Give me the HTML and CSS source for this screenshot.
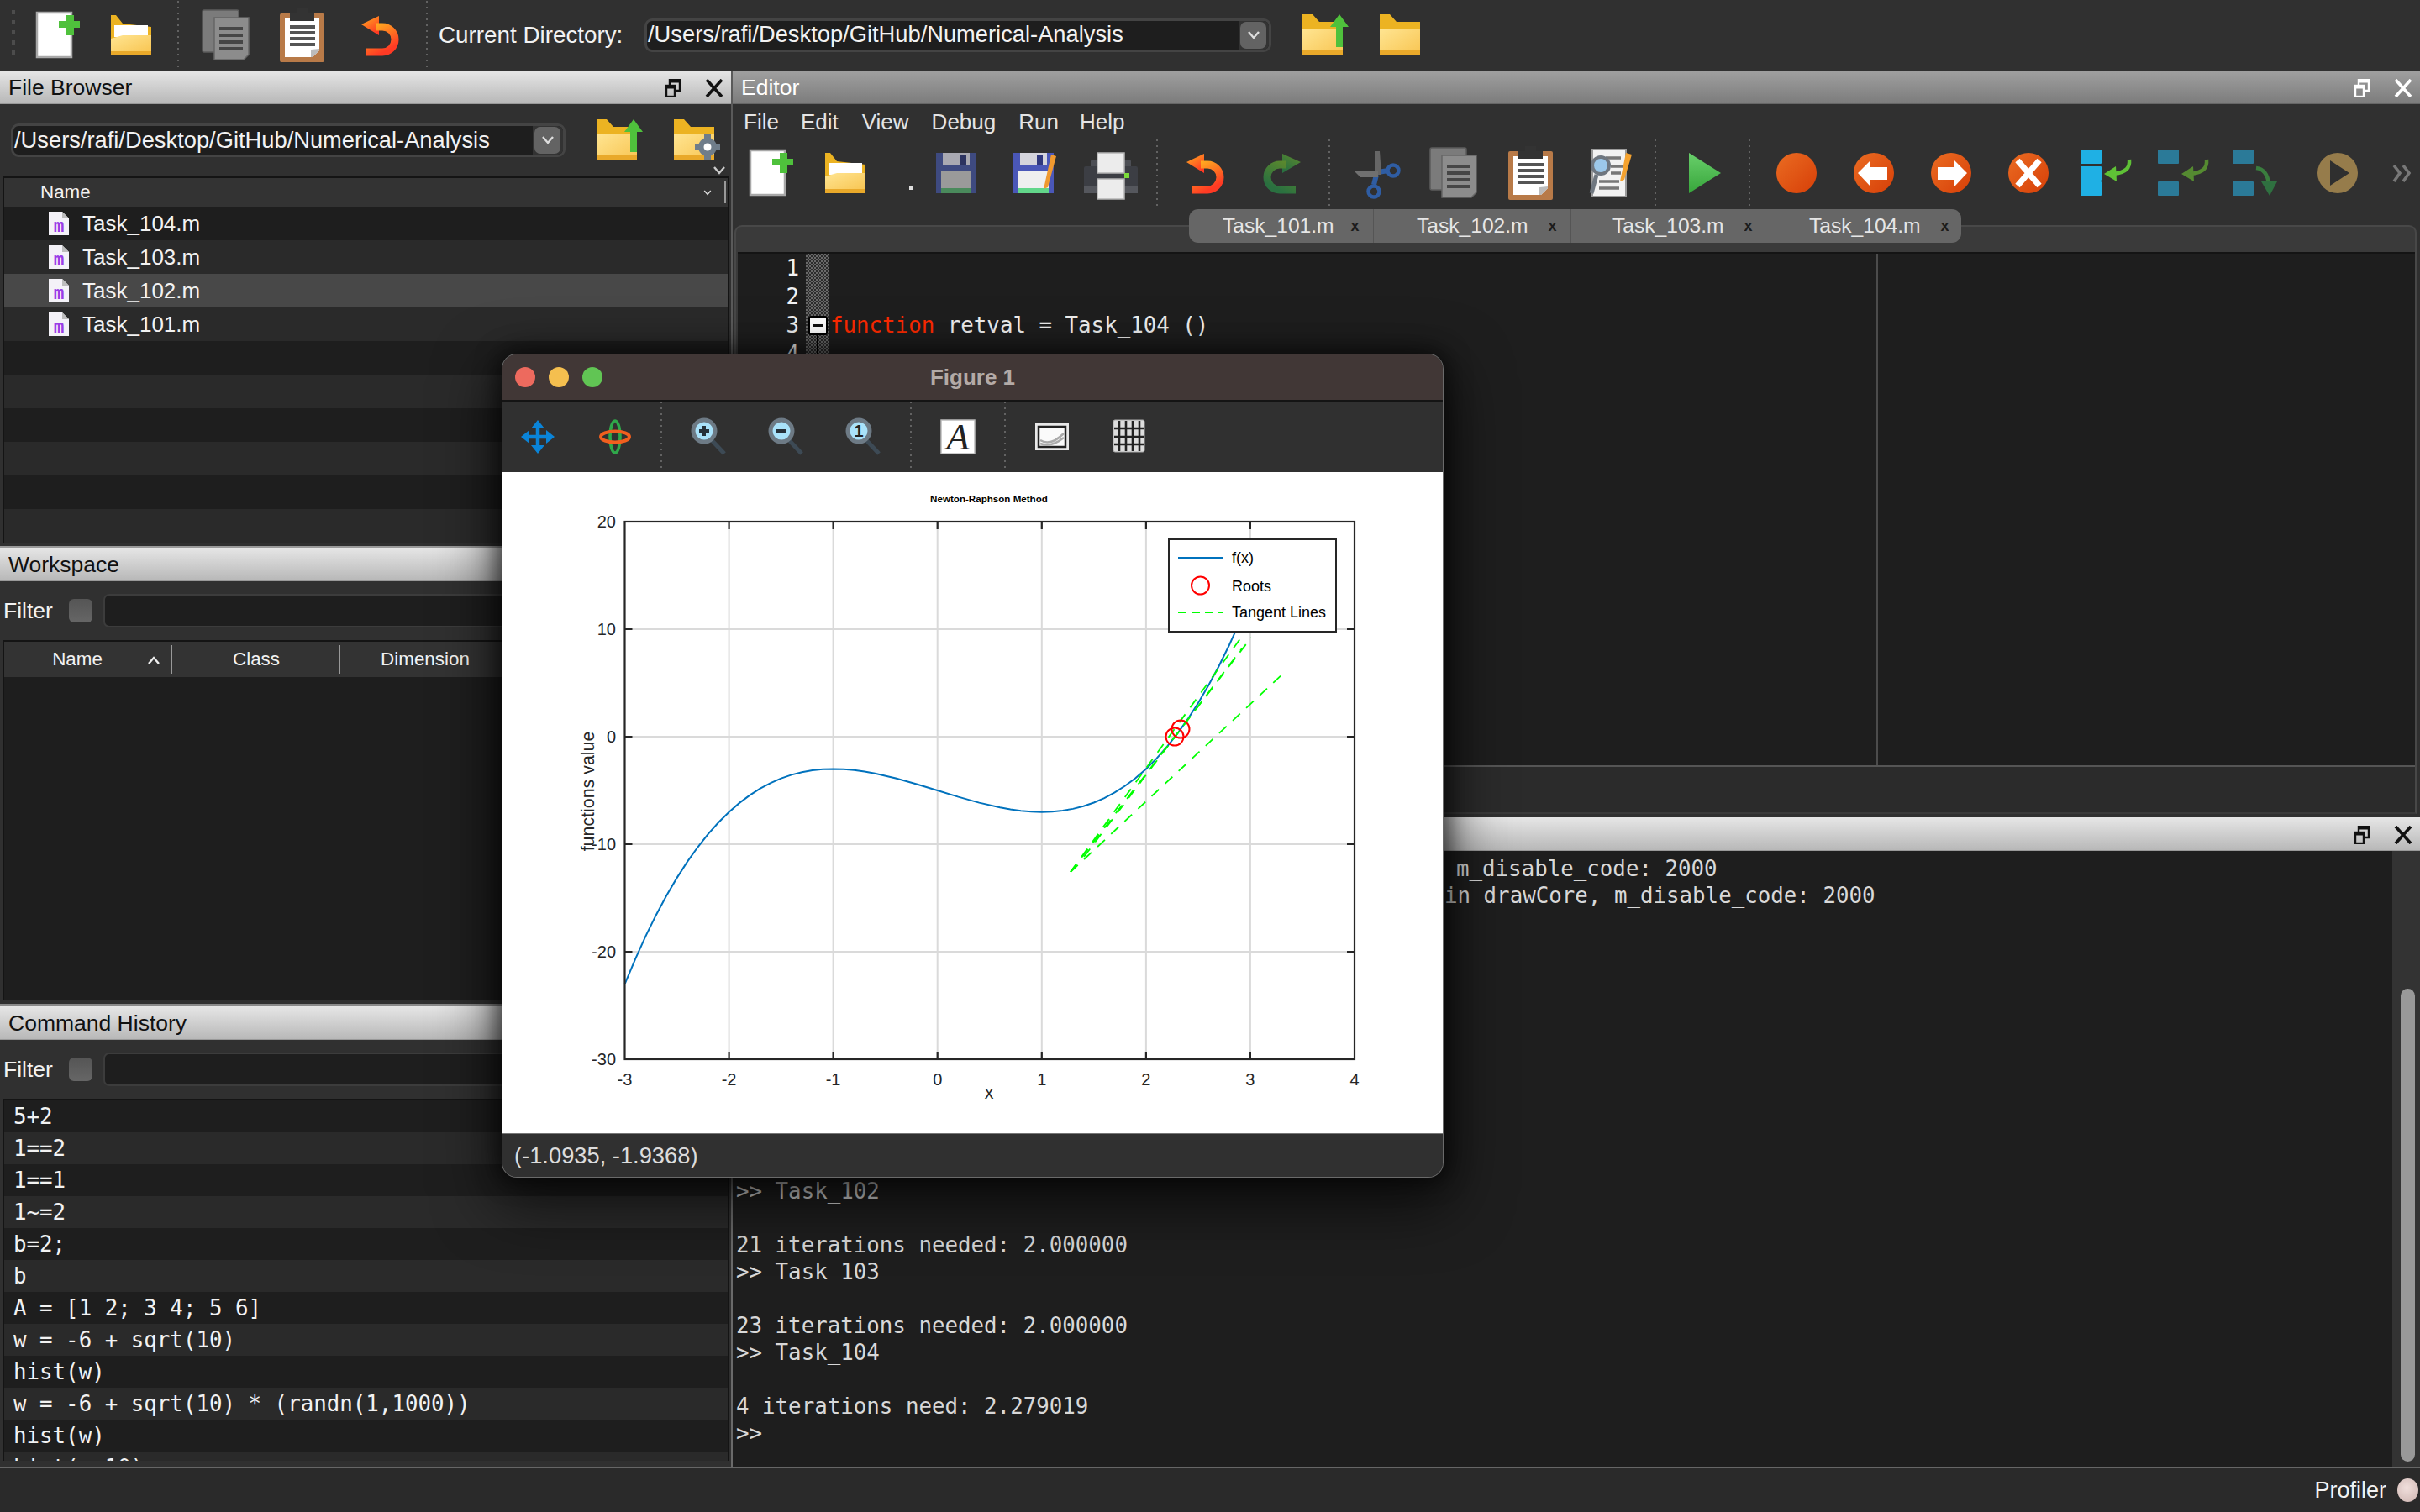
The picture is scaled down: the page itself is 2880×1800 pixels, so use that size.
FILE: index.html
```html
<!DOCTYPE html>
<html lang="en">
<head>
<meta charset="utf-8">
<title>GNU Octave</title>
<link rel="stylesheet" href="styles.css">
</head>
<body>
<svg class="defs" width="0" height="0" aria-hidden="true">
  <defs>
    <linearGradient id="gFolder" x1="0" y1="0" x2="1" y2="1"><stop offset="0" stop-color="#ffe592"/><stop offset="1" stop-color="#f8c552"/></linearGradient>
    <linearGradient id="gUndo" x1="0" y1="0" x2="0.6" y2="1"><stop offset="0" stop-color="#ffb31f"/><stop offset="1" stop-color="#ff3a24"/></linearGradient>
    <linearGradient id="gRedo" x1="1" y1="0" x2="0.4" y2="1"><stop offset="0" stop-color="#5f8a2c"/><stop offset="1" stop-color="#2a7040"/></linearGradient>
    <linearGradient id="gRun" x1="0" y1="0" x2="0" y2="1"><stop offset="0" stop-color="#69cf6b"/><stop offset="1" stop-color="#37a63b"/></linearGradient>
    <linearGradient id="gRec" x1="0" y1="0" x2="1" y2="1"><stop offset="0" stop-color="#ea6c22"/><stop offset="1" stop-color="#d73f08"/></linearGradient>

    <symbol id="i-new" viewBox="0 0 64 64">
      <rect x="7" y="5" width="41" height="53" fill="#fff" stroke="#a8a8a8" stroke-width="2.5"/>
      <path d="M42 8h9v7h7v8h-7v9h-9v-9h-9v-8h9z" fill="#4fc13c"/>
    </symbol>
    <symbol id="i-open" viewBox="0 0 64 64">
      <path d="M8 8h6l8 10 34 4v34H8z" fill="#ecb322"/>
      <rect x="12" y="20" width="40" height="14" fill="#fff"/>
      <path d="M8 36l14-4h34v20H8z" fill="url(#gFolder)"/>
      <rect x="8" y="51" width="48" height="5" fill="#e9a92a"/>
    </symbol>
    <symbol id="i-folder" viewBox="0 0 64 64">
      <path d="M8 7h12l8 9h28v12H8z" fill="#ecb322"/>
      <rect x="8" y="24" width="48" height="31" fill="url(#gFolder)"/>
      <rect x="8" y="50" width="48" height="5" fill="#e9a92a"/>
    </symbol>
    <symbol id="i-folder-up" viewBox="0 0 64 64">
      <use href="#i-folder" width="64" height="64"/>
      <path d="M52 7l11 15h-7v24h-8V22h-7z" fill="#4fc13c"/>
    </symbol>
    <symbol id="i-folder-gear" viewBox="0 0 64 64">
      <use href="#i-folder" width="64" height="64"/>
      <circle cx="48" cy="40" r="11" fill="#6f7d8a"/>
      <path d="M44 24h8v32h-8zM33 36h30v8H33z" fill="#6f7d8a"/>
      <circle cx="48" cy="40" r="4.5" fill="#fff"/>
    </symbol>
    <symbol id="i-save" viewBox="0 0 64 64">
      <rect x="8" y="8" width="48" height="48" fill="#3e4a80"/>
      <rect x="16" y="8" width="32" height="15" fill="#a9a9b2"/>
      <rect x="37" y="11" width="7" height="11" fill="#2c3360"/>
      <rect x="14" y="30" width="36" height="26" fill="#9a9a9a"/>
      <rect x="14" y="50" width="36" height="6" fill="#4a8a5c"/>
    </symbol>
    <symbol id="i-saveas" viewBox="0 0 64 64">
      <rect x="5" y="8" width="48" height="48" fill="#4a57b8"/>
      <rect x="13" y="8" width="32" height="15" fill="#d4d4dc"/>
      <rect x="33" y="11" width="7" height="11" fill="#30387e"/>
      <rect x="11" y="30" width="36" height="26" fill="#efefef"/>
      <rect x="11" y="50" width="36" height="6" fill="#62d68a"/>
      <path d="M50 10l6 2-10 37-5 2z" fill="#f0992f"/>
    </symbol>
    <symbol id="i-print" viewBox="0 0 64 64">
      <rect x="8" y="16" width="48" height="12" rx="2" fill="#4c4e54"/>
      <rect x="0" y="24" width="64" height="32" rx="2" fill="#3c3e44"/>
      <rect x="0" y="48" width="64" height="8" fill="#55575d"/>
      <rect x="16" y="8" width="32" height="24" fill="#ececec" stroke="#b5b5b5" stroke-width="1.5"/>
      <rect x="16" y="39" width="32" height="24" fill="#ececec" stroke="#b5b5b5" stroke-width="1.5"/>
      <rect x="48" y="32" width="6" height="6" fill="#7bdc39"/>
    </symbol>
    <symbol id="i-undo" viewBox="0 0 64 64">
      <path d="M9 19L30 9v23z" fill="url(#gUndo)"/>
      <path d="M26 22h8a15 15 0 0 1 0 30H15" fill="none" stroke="url(#gUndo)" stroke-width="9"/>
    </symbol>
    <symbol id="i-redo" viewBox="0 0 64 64">
      <path d="M55 19L33 9v23z" fill="url(#gRedo)"/>
      <path d="M38 22h-8a15 15 0 0 0 0 30h19" fill="none" stroke="url(#gRedo)" stroke-width="9"/>
    </symbol>
    <symbol id="i-cut" viewBox="0 0 64 64">
      <path d="M33 31L45 29" stroke="#2f5da3" stroke-width="6" fill="none"/>
      <path d="M31 34L28 46" stroke="#2f5da3" stroke-width="6" fill="none"/>
      <circle cx="51" cy="29" r="6.5" fill="none" stroke="#2f5da3" stroke-width="4.5"/>
      <circle cx="28" cy="54" r="6.5" fill="none" stroke="#2f5da3" stroke-width="4.5"/>
      <path d="M29 6h6l2 28h-8z" fill="#666"/>
      <path d="M5 30h28v7H12z" fill="#707070"/>
    </symbol>
    <symbol id="i-copy" viewBox="0 0 64 64">
      <rect x="4" y="2" width="43" height="50" rx="2" fill="#7b7b7b" stroke="#5c5c5c" stroke-width="1.5"/>
      <path d="M18 11h41v44l-6 6H18z" fill="#8c8c8c" stroke="#666" stroke-width="1.5"/>
      <path d="M24 24h28M24 32h28M24 40h28M24 48h28" stroke="#464646" stroke-width="4"/>
    </symbol>
    <symbol id="i-paste" viewBox="0 0 64 64">
      <rect x="5" y="6" width="53" height="58" rx="2" fill="#b87a48"/>
      <path d="M11 12h41v38l-8 8H11z" fill="#fff"/>
      <path d="M44 58l8-8v-2l-10 1v9z" fill="#bcbcbc"/>
      <path d="M25 0h13v6h8v9H17V6h8z" fill="#333"/>
      <path d="M17 22h30M17 29h30M17 36h30M17 43h30" stroke="#555" stroke-width="4"/>
    </symbol>
    <symbol id="i-find" viewBox="0 0 64 64">
      <rect x="10" y="4" width="40" height="56" fill="#f2f2f2" stroke="#9a9a9a" stroke-width="2"/>
      <path d="M26 14h18M32 24h14M32 32h12M18 42h24M18 50h24" stroke="#777" stroke-width="3.5"/>
      <path d="M15 34L9 56" stroke="#6f7780" stroke-width="5"/>
      <circle cx="20" cy="23" r="10" fill="#9cc8ea" stroke="#6f7780" stroke-width="4"/>
      <path d="M50 8l7 2-9 30-5 2z" fill="#f4a22f"/>
    </symbol>
    <symbol id="i-run" viewBox="0 0 64 64"><path d="M13 8l38 24-38 24z" fill="url(#gRun)"/></symbol>
    <symbol id="i-rec" viewBox="0 0 64 64"><circle cx="32" cy="32" r="24" fill="url(#gRec)"/></symbol>
    <symbol id="i-back" viewBox="0 0 64 64">
      <circle cx="32" cy="32" r="24" fill="url(#gRec)"/>
      <path d="M13 32l15-15v8h20v15H28v8z" fill="#fff"/>
    </symbol>
    <symbol id="i-fwd" viewBox="0 0 64 64">
      <circle cx="32" cy="32" r="24" fill="url(#gRec)"/>
      <path d="M51 32L36 17v8H16v15h20v8z" fill="#fff"/>
    </symbol>
    <symbol id="i-stop" viewBox="0 0 64 64">
      <circle cx="32" cy="32" r="24" fill="url(#gRec)"/>
      <path d="M19 17l26 30M45 17L19 47" stroke="#fff" stroke-width="7" fill="none"/>
    </symbol>
    <symbol id="i-step" viewBox="0 0 64 64">
      <rect x="2" y="4" width="25" height="17" rx="1" fill="#1fb0e4"/>
      <rect x="2" y="24" width="25" height="17" rx="1" fill="#1fb0e4"/>
      <rect x="2" y="42" width="25" height="17" rx="1" fill="#1fb0e4"/>
      <path d="M60 16c1 10-4 15-18 17" fill="none" stroke="#5fc136" stroke-width="4.5"/>
      <path d="M30 33l14-9 1 18z" fill="#5fc136"/>
    </symbol>
    <symbol id="i-stepin" viewBox="0 0 64 64">
      <rect x="2" y="4" width="25" height="17" rx="1" fill="#2b7a98"/>
      <rect x="2" y="42" width="25" height="17" rx="1" fill="#2b7a98"/>
      <path d="M60 16c1 10-4 15-18 17" fill="none" stroke="#558a31" stroke-width="4.5"/>
      <path d="M30 33l14-9 1 18z" fill="#558a31"/>
    </symbol>
    <symbol id="i-stepout" viewBox="0 0 64 64">
      <rect x="2" y="4" width="25" height="17" rx="1" fill="#2b7a98"/>
      <rect x="2" y="42" width="25" height="17" rx="1" fill="#2b7a98"/>
      <path d="M30 26c9 1 14 8 15 20" fill="none" stroke="#3a7d3e" stroke-width="4.5"/>
      <path d="M36 42h19l-9 17z" fill="#2f7040"/>
    </symbol>
    <symbol id="i-cont" viewBox="0 0 64 64">
      <circle cx="32" cy="32" r="24" fill="#967c4b"/>
      <path d="M23 17l23 15-23 15z" fill="#2f2f2f"/>
    </symbol>
    <symbol id="i-more" viewBox="0 0 64 64">
      <path d="M21 23l7 9-7 10M32 23l7 9-7 10" fill="none" stroke="#777" stroke-width="3.6"/>
    </symbol>
    <symbol id="i-mfile" viewBox="0 0 26 30">
      <path d="M1 1h16l8 8v20H1z" fill="#f4f2f8"/>
      <path d="M17 1l8 8h-8z" fill="#bdbdbd"/>
      <text x="13" y="25" text-anchor="middle" class="m-letter">m</text>
    </symbol>
    <symbol id="i-dock" viewBox="0 0 20 22">
      <path d="M6 7V1h12v13h-6" fill="none" stroke="currentColor" stroke-width="2.4"/>
      <path d="M6 3h12" stroke="currentColor" stroke-width="3"/>
      <rect x="2" y="8" width="10" height="13" fill="none" stroke="currentColor" stroke-width="2.4"/>
      <path d="M2 10h10" stroke="currentColor" stroke-width="3"/>
    </symbol>
    <symbol id="i-close" viewBox="0 0 22 22">
      <path d="M2 1l18 20M20 1L2 21" fill="none" stroke="currentColor" stroke-width="3.6"/>
    </symbol>
    <symbol id="i-chev" viewBox="0 0 16 10">
      <path d="M2 1l6 7 6-7" fill="none" stroke="currentColor" stroke-width="2.4"/>
    </symbol>

    <symbol id="f-pan" viewBox="0 0 48 48">
      <path d="M24 8v32M8 24h32" stroke="#0a84d8" stroke-width="4.5" fill="none"/>
      <path d="M24 4l8 10H16zM24 44l8-10H16zM4 24l10-8v16zM44 24l-10-8v16z" fill="#0a84d8"/>
    </symbol>
    <symbol id="f-rot" viewBox="0 0 48 48">
      <ellipse cx="24" cy="24" rx="6" ry="19" fill="none" stroke="#2fa84a" stroke-width="3.6"/>
      <ellipse cx="24" cy="24" rx="17" ry="6.5" fill="none" stroke="#f15f1e" stroke-width="4"/>
    </symbol>
    <symbol id="f-zin" viewBox="0 0 48 48">
      <path d="M28 28l15 16" stroke="#3d4a55" stroke-width="5"/>
      <circle cx="19" cy="17" r="13" fill="#a9e2fa" stroke="#6d7a85" stroke-width="5"/>
      <path d="M13 17h12M19 11v12" stroke="#26313a" stroke-width="4"/>
    </symbol>
    <symbol id="f-zout" viewBox="0 0 48 48">
      <path d="M28 28l15 16" stroke="#3d4a55" stroke-width="5"/>
      <circle cx="19" cy="17" r="13" fill="#a9e2fa" stroke="#6d7a85" stroke-width="5"/>
      <path d="M13 17h12" stroke="#26313a" stroke-width="4"/>
    </symbol>
    <symbol id="f-zone" viewBox="0 0 48 48">
      <path d="M28 28l15 16" stroke="#3d4a55" stroke-width="5"/>
      <circle cx="19" cy="17" r="13" fill="#a9e2fa" stroke="#6d7a85" stroke-width="5"/>
      <text x="19" y="24" text-anchor="middle" class="one-letter">1</text>
    </symbol>
    <symbol id="f-text" viewBox="0 0 48 48">
      <rect x="4" y="4" width="40" height="40" fill="#fff" stroke="#bbb" stroke-width="1.5"/>
      <text x="24" y="39" text-anchor="middle" class="a-letter">A</text>
    </symbol>
    <symbol id="f-axes" viewBox="0 0 48 48">
      <rect x="4" y="8" width="40" height="32" fill="#e8e8e8"/>
      <rect x="8" y="12" width="32" height="24" fill="#fafafa" stroke="#222" stroke-width="2.5"/>
      <path d="M10 28c8 5 18 2 28-8M10 32c8 3 18 1 28-7" stroke="#aaa" stroke-width="2.5" fill="none"/>
    </symbol>
    <symbol id="f-grid" viewBox="0 0 48 48">
      <rect x="5" y="4" width="37" height="38" rx="2" fill="#ddd" stroke="#aaa"/>
      <path d="M12 5v36M20 5v36M28 5v36M36 5v36M6 14h35M6 24h35M6 33h35" stroke="#222" stroke-width="2.6"/>
    </symbol>
  </defs>
</svg>

<header class="top-bar">
  <div class="tools tools-top">
    <span class="grip"></span>
    <svg class="ic"><use href="#i-new"/></svg>
    <svg class="ic"><use href="#i-open"/></svg>
    <span class="sep"></span>
    <svg class="ic"><use href="#i-copy"/></svg>
    <svg class="ic"><use href="#i-paste"/></svg>
    <svg class="ic"><use href="#i-undo"/></svg>
    <span class="sep"></span>
  </div>
  <span class="cwd-label">Current Directory:</span>
  <div class="combo combo-top">
    <span class="combo-text">/Users/rafi/Desktop/GitHub/Numerical-Analysis</span>
    <span class="combo-btn"><svg class="chev"><use href="#i-chev"/></svg></span>
  </div>
  <svg class="ic ic-up"><use href="#i-folder-up"/></svg>
  <svg class="ic ic-browse"><use href="#i-folder"/></svg>
</header>

<main class="workspace-area">
  <div class="left-col">
    <section class="pane pane-files">
      <div class="title-bar"><span class="title-text">File Browser</span><svg class="t-dock"><use href="#i-dock"/></svg><svg class="t-close"><use href="#i-close"/></svg></div>
      <div class="path-row">
        <div class="combo combo-files">
          <span class="combo-text">/Users/rafi/Desktop/GitHub/Numerical-Analysis</span>
          <span class="combo-btn"><svg class="chev"><use href="#i-chev"/></svg></span>
        </div>
        <svg class="ic ic-fup"><use href="#i-folder-up"/></svg>
        <svg class="ic ic-fgear"><use href="#i-folder-gear"/></svg>
        <svg class="chev overflow-chev"><use href="#i-chev"/></svg>
      </div>
      <div class="table files-table">
        <div class="thead"><span class="th-name">Name</span><svg class="chev th-chev"><use href="#i-chev"/></svg><span class="th-bar"></span></div>
        <div class="row"><svg class="mfile"><use href="#i-mfile"/></svg>Task_104.m</div>
        <div class="row"><svg class="mfile"><use href="#i-mfile"/></svg>Task_103.m</div>
        <div class="row selected"><svg class="mfile"><use href="#i-mfile"/></svg>Task_102.m</div>
        <div class="row"><svg class="mfile"><use href="#i-mfile"/></svg>Task_101.m</div>
        <div class="row"></div><div class="row"></div><div class="row"></div><div class="row"></div><div class="row"></div><div class="row"></div>
      </div>
    </section>

    <section class="pane pane-vars">
      <div class="title-bar"><span class="title-text">Workspace</span></div>
      <div class="filter-row"><span class="filter-label">Filter</span><span class="check"></span><span class="filter-input"></span></div>
      <div class="table vars-table">
        <div class="thead vars-head">
          <span class="vh vh-name">Name<svg class="chev sort-up"><use href="#i-chev"/></svg></span>
          <span class="vh">Class</span>
          <span class="vh">Dimension</span>
        </div>
      </div>
    </section>

    <section class="pane pane-hist">
      <div class="title-bar"><span class="title-text">Command History</span></div>
      <div class="filter-row"><span class="filter-label">Filter</span><span class="check"></span><span class="filter-input"></span></div>
      <div class="table hist-table">
        <div class="hrow">5+2</div>
        <div class="hrow">1==2</div>
        <div class="hrow">1==1</div>
        <div class="hrow">1~=2</div>
        <div class="hrow">b=2;</div>
        <div class="hrow">b</div>
        <div class="hrow">A = [1 2; 3 4; 5 6]</div>
        <div class="hrow">w = -6 + sqrt(10)</div>
        <div class="hrow">hist(w)</div>
        <div class="hrow">w = -6 + sqrt(10) * (randn(1,1000))</div>
        <div class="hrow">hist(w)</div>
        <div class="hrow">hist(w,10)</div>
      </div>
    </section>
  </div>

  <div class="right-col">
    <section class="editor-pane">
      <div class="title-bar title-dim"><span class="title-text">Editor</span><svg class="t-dock"><use href="#i-dock"/></svg><svg class="t-close"><use href="#i-close"/></svg></div>
      <nav class="menu"><span>File</span><span>Edit</span><span>View</span><span>Debug</span><span>Run</span><span>Help</span></nav>
      <div class="tools tools-editor">
        <svg class="ic"><use href="#i-new"/></svg>
        <svg class="ic"><use href="#i-open"/></svg>
        <span class="tiny-drop"></span>
        <svg class="ic"><use href="#i-save"/></svg>
        <svg class="ic"><use href="#i-saveas"/></svg>
        <svg class="ic"><use href="#i-print"/></svg>
        <span class="sep"></span>
        <svg class="ic"><use href="#i-undo"/></svg>
        <svg class="ic"><use href="#i-redo"/></svg>
        <span class="sep"></span>
        <svg class="ic"><use href="#i-cut"/></svg>
        <svg class="ic"><use href="#i-copy"/></svg>
        <svg class="ic"><use href="#i-paste"/></svg>
        <svg class="ic"><use href="#i-find"/></svg>
        <span class="sep"></span>
        <svg class="ic"><use href="#i-run"/></svg>
        <span class="sep"></span>
        <svg class="ic"><use href="#i-rec"/></svg>
        <svg class="ic"><use href="#i-back"/></svg>
        <svg class="ic"><use href="#i-fwd"/></svg>
        <svg class="ic"><use href="#i-stop"/></svg>
        <svg class="ic"><use href="#i-step"/></svg>
        <svg class="ic"><use href="#i-stepin"/></svg>
        <svg class="ic"><use href="#i-stepout"/></svg>
        <svg class="ic"><use href="#i-cont"/></svg>
        <svg class="ic"><use href="#i-more"/></svg>
      </div>
      <div class="tabs">
        <div class="tab tab-first"><span>Task_101.m</span><i>x</i></div>
        <div class="tab tab-mid"><span>Task_102.m</span><i>x</i></div>
        <div class="tab"><span>Task_103.m</span><i>x</i></div>
        <div class="tab tab-last"><span>Task_104.m</span><i>x</i></div>
      </div>
      <div class="tab-frame">
        <div class="editor">
          <div class="gutter"><div>1</div><div>2</div><div>3</div><div>4</div></div>
          <div class="marks"><span class="fold"></span><span class="fold-line"></span></div>
          <div class="code">
            <div>&nbsp;</div><div>&nbsp;</div>
            <div><span class="kw">function</span> retval = Task_104 ()</div>
          </div>
        </div>
        <div class="editor-foot"></div>
      </div>
    </section>

    <section class="console-pane">
      <div class="title-bar"><span class="title-text">Command Window</span><svg class="t-dock"><use href="#i-dock"/></svg><svg class="t-close"><use href="#i-close"/></svg></div>
      <div class="console-body">
        <div class="console-text">
          <div class="log-a">m_disable_code: 2000</div>
          <div class="log-b">in drawCore, m_disable_code: 2000</div>
          <div class="spacer-10"></div>
          <div>&gt;&gt; Task_102</div>
          <div>&nbsp;</div>
          <div>21 iterations needed: 2.000000</div>
          <div>&gt;&gt; Task_103</div>
          <div>&nbsp;</div>
          <div>23 iterations needed: 2.000000</div>
          <div>&gt;&gt; Task_104</div>
          <div>&nbsp;</div>
          <div>4 iterations need: 2.279019</div>
          <div>&gt;&gt; <span class="caret"></span></div>
        </div>
        <div class="scroll-track"><span class="scroll-thumb"></span></div>
      </div>
    </section>
  </div>
</main>

<footer class="status-bar"><span>Profiler</span><span class="led"></span></footer>

<section class="figure">
  <div class="fig-title">
    <span class="light l-red"></span><span class="light l-yellow"></span><span class="light l-green"></span>
    <span class="fig-name">Figure 1</span>
  </div>
  <div class="tools tools-fig">
    <svg class="ic-f"><use href="#f-pan"/></svg>
    <svg class="ic-f"><use href="#f-rot"/></svg>
    <span class="sep"></span>
    <svg class="ic-f"><use href="#f-zin"/></svg>
    <svg class="ic-f"><use href="#f-zout"/></svg>
    <svg class="ic-f"><use href="#f-zone"/></svg>
    <span class="sep"></span>
    <svg class="ic-f"><use href="#f-text"/></svg>
    <span class="sep"></span>
    <svg class="ic-f"><use href="#f-axes"/></svg>
    <svg class="ic-f"><use href="#f-grid"/></svg>
  </div>
  <svg class="plot" viewBox="598 562 1119 787">
    <g class="grid">
      <path d="M867.6 621V1261M991.6 621V1261M1115.7 621V1261M1239.8 621V1261M1363.9 621V1261M1487.9 621V1261"/>
      <path d="M743.5 749H1612M743.5 877H1612M743.5 1005H1612M743.5 1133H1612"/>
    </g>
    <g transform="translate(1115.7 877) scale(124.07 -12.81)">
      <polyline class="curve" points="-3,-23 -2.9,-20.689 -2.8,-18.552 -2.7,-16.583 -2.6,-14.776 -2.5,-13.125 -2.4,-11.624 -2.3,-10.267 -2.2,-9.048 -2.1,-7.961 -2,-7 -1.9,-6.159 -1.8,-5.432 -1.7,-4.813 -1.6,-4.296 -1.5,-3.875 -1.4,-3.544 -1.3,-3.297 -1.2,-3.128 -1.1,-3.031 -1,-3 -0.9,-3.029 -0.8,-3.112 -0.7,-3.243 -0.6,-3.416 -0.4,-3.864 -0.2,-4.408 0,-5 0.2,-5.592 0.4,-6.136 0.6,-6.584 0.7,-6.757 0.8,-6.888 0.9,-6.971 1,-7 1.1,-6.969 1.2,-6.872 1.3,-6.703 1.4,-6.456 1.5,-6.125 1.6,-5.704 1.7,-5.187 1.8,-4.568 1.9,-3.841 2,-3 2.1,-2.039 2.2,-0.952 2.3,0.267 2.4,1.624 2.5,3.125 2.6,4.776 2.7,6.583 2.8,8.552 2.9,10.689 3,13"/>
    </g>
    <g class="tangent">
      <path d="M1274 1038L1529 800"/>
      <path d="M1274 1038L1477 759"/>
      <path d="M1274 1038L1489 759"/>
      <path d="M1290 1020L1478 772"/>
    </g>
    <circle class="root" cx="1398" cy="877" r="10.5"/>
    <circle class="root" cx="1405" cy="868" r="10.5"/>
    <g class="axes">
      <rect x="743.5" y="621" width="868.5" height="640"/>
      <path d="M743.5 749h9M743.5 877h9M743.5 1005h9M743.5 1133h9M1612 749h-9M1612 877h-9M1612 1005h-9M1612 1133h-9"/>
      <path d="M867.6 621v9M991.6 621v9M1115.7 621v9M1239.8 621v9M1363.9 621v9M1487.9 621v9M867.6 1261v-9M991.6 1261v-9M1115.7 1261v-9M1239.8 1261v-9M1363.9 1261v-9M1487.9 1261v-9"/>
    </g>
    <text class="plot-title" x="1177" y="598" text-anchor="middle">Newton-Raphson Method</text>
    <g class="ylabels" text-anchor="end">
      <text x="733" y="628">20</text><text x="733" y="756">10</text><text x="733" y="884">0</text><text x="733" y="1012">-10</text><text x="733" y="1140">-20</text><text x="733" y="1268">-30</text>
    </g>
    <g class="xlabels" text-anchor="middle">
      <text x="743.5" y="1292">-3</text><text x="867.6" y="1292">-2</text><text x="991.6" y="1292">-1</text><text x="1115.7" y="1292">0</text><text x="1239.8" y="1292">1</text><text x="1363.9" y="1292">2</text><text x="1487.9" y="1292">3</text><text x="1612" y="1292">4</text>
    </g>
    <text class="axis-label" x="1177" y="1308" text-anchor="middle">x</text>
    <text class="axis-label" transform="translate(707 942) rotate(-90)" text-anchor="middle">functions value</text>
    <g class="legend">
      <rect x="1391" y="642" width="199" height="110"/>
      <path class="leg-curve" d="M1402 664H1455"/>
      <circle class="root" cx="1428.5" cy="697" r="10.5"/>
      <path class="leg-tan" d="M1402 729H1455"/>
      <text x="1466" y="670">f(x)</text><text x="1466" y="704">Roots</text><text x="1466" y="735">Tangent Lines</text>
    </g>
  </svg>
  <div class="fig-status">(-1.0935, -1.9368)</div>
</section>
</body>
</html>
```
FILE: styles.css
```css
* { box-sizing: border-box; }
html, body { margin: 0; padding: 0; }
body {
  width: 2880px;
  height: 1800px;
  overflow: hidden;
  position: relative;
  display: flex;
  flex-direction: column;
  background: #303030;
  color: #f2f2f2;
  font-family: "Liberation Sans", Arial, sans-serif;
  font-size: 26px;
}
.defs { position: absolute; }
.ic { width: 64px; height: 64px; display: block; }
.ic-f { width: 48px; height: 48px; display: block; }
.chev { width: 16px; height: 10px; display: block; color: #ddd; }
.m-letter { font: bold 21px "DejaVu Sans Mono", monospace; fill: #9a3de6; }
.one-letter { font: bold 20px "Liberation Sans", sans-serif; fill: #222; }
.a-letter { font: italic 44px "Liberation Serif", serif; fill: #222; }

/* toolbars: icon lefts are set by the column tracks */
.tools { display: grid; align-items: center; justify-items: start; }
.sep {
  width: 2px;
  height: 100%;
  background: repeating-linear-gradient(#626262 0 2px, transparent 2px 7px);
}
.tools-top {
  height: 82px;
  padding-left: 14px;
  grid-template-columns: 23px 87px 87px 26px 91px 93px 86px 15px;
}
.grip { width: 4px; height: 60px; background: repeating-linear-gradient(#4c4c4c 0 5px, transparent 5px 12px); }

.top-bar { height: 84px; display: flex; align-items: center; background: #303030; flex: none; }
.cwd-label { width: 245px; font-size: 27.8px; }
.combo {
  display: flex;
  align-items: center;
  height: 40px;
  border: 3px solid #444;
  border-radius: 9px;
  background: #1e1e1e;
  overflow: hidden;
  flex: none;
}
.combo-text { flex: 1; padding-left: 1px; font-size: 27.3px; white-space: nowrap; }
.combo-top .combo-text { padding-bottom: 3px; }
.combo-btn {
  width: 36px;
  height: 100%;
  background: #333;
  display: flex;
  align-items: center;
  justify-content: center;
  position: relative;
}
.combo-btn::before {
  content: "";
  position: absolute;
  inset: 1px 3px 1px 2px;
  background: #636363;
  border-radius: 7px;
}
.combo-btn .chev { position: relative; }
.combo-top { width: 746px; }
.combo-files { width: 660px; }
.ic-up { margin-left: 29px; }
.ic-browse { margin-left: 28px; }

/* layout */
.workspace-area { flex: none; height: 1662px; display: flex; }
.left-col { width: 870px; display: flex; flex-direction: column; flex: none; }
.right-col { flex: 1; display: flex; flex-direction: column; min-width: 0; }
.pane { display: flex; flex-direction: column; }
.pane-files { height: 568px; border-bottom: 2px solid #9a9a9a; }
.pane-vars { height: 546px; border-bottom: 3px solid #8a8a8a; }
.pane-hist { height: 548px; }

.title-bar {
  height: 40px;
  flex: none;
  display: flex;
  align-items: center;
  padding: 2px 0 0 10px;
  background: linear-gradient(#e6e6e6, #b8b8b8);
  color: #111;
  border-bottom: 1px solid #999;
}
.title-dim { background: linear-gradient(#a0a0a0, #7c7c7c); color: #fff; border-bottom-color: #666; }
.title-text { flex: 1; font-size: 26.5px; }
.t-dock { width: 20px; height: 22px; color: inherit; margin-right: 28px; }
.t-close { width: 22px; height: 22px; color: inherit; margin-right: 9px; }

.path-row {
  position: relative;
  height: 86px;
  flex: none;
  display: flex;
  align-items: center;
  padding-left: 13px;
}
.ic-fup { margin-left: 29px; }
.ic-fgear { margin-left: 28px; }
.overflow-chev { position: absolute; left: 848px; top: 74px; color: #ccc; }

.table { margin-left: 3px; width: 865px; border: 2px solid #141414; border-bottom: 0; }
.thead { height: 34px; background: #333; display: flex; align-items: center; position: relative; font-size: 22.4px; }
.th-name { padding-left: 43px; flex: 1; }
.th-chev { width: 10px; height: 7px; margin-right: 15px; }
.th-bar { width: 2px; height: 26px; background: #999; margin-right: 2px; }
.row { height: 40px; display: flex; align-items: center; padding-left: 52px; background: #1e1e1e; font-size: 26px; }
.row:nth-child(odd) { background: #2a2a2a; }
.row.selected { background: #484848; }
.mfile { width: 26px; height: 30px; margin-right: 15px; flex: none; }
.files-table { height: 436px; flex: none; }

.filter-row { height: 70px; flex: none; display: flex; align-items: center; padding: 0 0 0 4px; }
.filter-label { width: 78px; font-size: 26.5px; }
.check { width: 28px; height: 28px; border-radius: 6px; background: linear-gradient(#555, #666); }
.filter-input { width: 740px; height: 40px; margin-left: 13px; background: #1e1e1e; border: 2px solid #3c3c3c; border-radius: 7px; }
.vars-table { height: 428px; background: #1e1e1e; }
.vars-head { height: 42px; display: grid; grid-template-columns: 200px 200px 200px; }
.vh { height: 34px; display: flex; align-items: center; justify-content: center; padding-left: 2px; border-right: 2px solid #999; position: relative; }
.vh:last-child { border-right: 0; }
.vh-name { padding-right: 26px; }
.sort-up { position: absolute; right: 12px; top: 13px; transform: rotate(180deg); color: #eee; }
.hist-table { height: 431px; overflow: hidden; }
.hrow {
  height: 38px;
  line-height: 38px;
  padding-left: 11px;
  background: #1e1e1e;
  font-family: "DejaVu Sans Mono", monospace;
  font-size: 25.8px;
  white-space: pre;
}
.hrow:nth-child(even) { background: #2a2a2a; }

/* editor */
.editor-pane { height: 889px; flex: none; display: flex; flex-direction: column; border-left: 2px solid #5a5a5a; }
.menu { height: 42px; flex: none; display: flex; align-items: center; gap: 24px; padding-left: 13px; font-size: 26px; color: #e4e4e4; }
.menu span:nth-child(2) { margin-left: 2px; }
.menu span:nth-child(3) { margin-left: 4px; }
.menu span:nth-child(4) { margin-left: 3px; }
.menu span:nth-child(5) { margin-left: 3px; }
.menu span:nth-child(6) { margin-left: 1px; }
.tools-editor {
  height: 80px;
  flex: none;
  padding-left: 14px;
  grid-template-columns: 88px 78px 54px 95px 89px 86px 27px 90px 88px 26px 91px 92px 95px 84px 28px 84px 25px 92px 92px 92px 92px 92px 89px 95px 78px 64px;
}
.tiny-drop { width: 4px; height: 4px; background: #ddd; margin: 36px 0 0 30px; }
.tabs {
  display: flex;
  height: 40px;
  width: 919px;
  margin: 3px 0 -21px 543px;
  background: #666;
  border-radius: 11px;
  position: relative;
  z-index: 1;
  flex: none;
  font-size: 24.6px;
  color: #e6e6e6;
  overflow: hidden;
}
.tab { width: 234px; display: flex; align-items: center; padding-left: 49px; gap: 24px; flex: none; }
.tab-first { width: 220px; padding-left: 40px; gap: 20px; border-right: 1px solid #555; }
.tab-mid { width: 235px; padding-left: 51px; border-right: 1px solid #555; }
.tab-last { width: 230px; }
.tab i { font-style: normal; font-weight: bold; font-size: 18px; color: #1c1c1c; }

.tab-frame {
  flex: 1;
  margin: 0 4px 4px 2px;
  border: 2px solid #484848;
  border-bottom-color: #3a3a3a;
  border-radius: 9px 9px 0 0;
  background: #3a3a3a;
  padding-top: 30px;
  display: flex;
  flex-direction: column;
  padding-left: 2px;
  min-height: 0;
}
.editor {
  height: 611px;
  flex: none;
  display: flex;
  background: #1e1e1e;
  border-top: 2px solid #141414;
  font-family: "DejaVu Sans Mono", monospace;
  font-size: 25.8px;
  line-height: 34px;
  overflow: hidden;
}
.gutter { width: 81px; padding-right: 8px; text-align: right; flex: none; }
.gutter div { height: 34px; }
.marks {
  width: 27px;
  flex: none;
  position: relative;
  background: repeating-conic-gradient(#6a6a6a 0 25%, #2c2c2c 0 50%) 0 0 / 4px 4px;
}
.fold {
  position: absolute;
  left: 3px;
  top: 74px;
  width: 23px;
  height: 23px;
  background: #fff;
  border: 2px solid #000;
  border-radius: 3px;
}
.fold::after { content: ""; position: absolute; left: 3px; right: 3px; top: 8px; height: 3px; background: #111; }
.fold-line { position: absolute; left: 13px; top: 97px; bottom: 0; width: 2px; background: #000; }
.code { width: 1249px; flex: none; padding-left: 2px; border-right: 2px solid #4c4c4c; color: #f0f0f0; }
.code div { white-space: pre; height: 34px; }
.kw { color: #ff2a00; }
.editor-foot { flex: 1; background: #2b2b2b; border-top: 2px solid #555; margin-left: -2px; }

/* console */
.console-pane { flex: 1; display: flex; flex-direction: column; min-height: 0; border-left: 2px solid #6a6a6a; }
.console-body { flex: 1; display: flex; background: #1e1e1e; min-height: 0; }
.console-text {
  flex: 1;
  padding: 5px 0 0 4px;
  font-family: "DejaVu Sans Mono", monospace;
  font-size: 25.8px;
  line-height: 32px;
  color: #d8d8d8;
}
.console-text div { white-space: pre; }
.log-a { padding-left: 857px; }
.log-b { padding-left: 843px; }
.spacer-10 { height: 320px; }
.caret { display: inline-block; width: 1px; height: 30px; background: #ccc; vertical-align: -8px; }
.scroll-track { width: 33px; flex: none; background: #333; padding: 164px 6px 6px 10px; }
.scroll-thumb { display: block; width: 17px; height: 100%; background: #999; border-radius: 9px; }

/* status bar */
.status-bar {
  height: 54px;
  flex: none;
  border-top: 2px solid #666;
  background: #2a2a2a;
  display: flex;
  align-items: center;
  justify-content: flex-end;
  padding-right: 2px;
  gap: 13px;
  font-size: 27px;
}
.led { width: 25px; height: 28px; border-radius: 50%; background: radial-gradient(circle at 45% 40%, #f0dfdc, #cdb4b0); }

/* figure window */
.figure {
  position: absolute;
  left: 598px;
  top: 422px;
  width: 1119px;
  height: 979px;
  border-radius: 17px;
  overflow: hidden;
  display: flex;
  flex-direction: column;
  background: #303030;
  box-shadow: 0 0 0 1px #6a6a6a, 0 0 26px 6px rgba(0,0,0,.55), 0 24px 70px 10px rgba(0,0,0,.6);
}
.fig-title {
  height: 56px;
  flex: none;
  display: flex;
  align-items: center;
  position: relative;
  background: #413736;
  border-bottom: 2px solid #141414;
  padding-left: 15px;
  gap: 16px;
}
.light { width: 24px; height: 24px; border-radius: 50%; }
.l-red { background: #ed6a5e; }
.l-yellow { background: #f5bf4f; }
.l-green { background: #61c554; }
.fig-name { position: absolute; left: 0; right: 0; text-align: center; font-weight: bold; font-size: 26px; color: #b3aaa7; }
.tools-fig {
  height: 84px;
  flex: none;
  padding-left: 18px;
  background: #303030;
  grid-template-columns: 92px 78px 33px 92px 92px 80px 33px 79px 33px 92px 48px;
}
.plot { width: 1119px; height: 787px; display: block; background: #fff; flex: none; font-family: "Liberation Sans", sans-serif; }
.grid path { stroke: #dadada; stroke-width: 2; fill: none; }
.curve { fill: none; stroke: #0072bd; stroke-width: 2; vector-effect: non-scaling-stroke; }
.tangent path { stroke: #00ff00; stroke-width: 1.8; stroke-dasharray: 12 10; fill: none; }
.root { fill: none; stroke: #ff0000; stroke-width: 2; }
.axes rect, .axes path { fill: none; stroke: #262626; stroke-width: 2.2; }
.plot-title { font-size: 11.6px; font-weight: bold; fill: #000; }
.ylabels text, .xlabels text { font-size: 20px; fill: #262626; }
.axis-label { font-size: 21.4px; fill: #262626; }
.legend rect { fill: #fff; stroke: #262626; stroke-width: 2; }
.legend text { font-size: 18px; fill: #000; }
.leg-curve { stroke: #0072bd; stroke-width: 2; }
.leg-tan { stroke: #00ff00; stroke-width: 2; stroke-dasharray: 10 6; }
.fig-status { height: 52px; flex: none; display: flex; align-items: center; padding-left: 14px; font-size: 27.3px; color: #dcdcdc; background: #303030; border-top: 1px solid #777; }
```
